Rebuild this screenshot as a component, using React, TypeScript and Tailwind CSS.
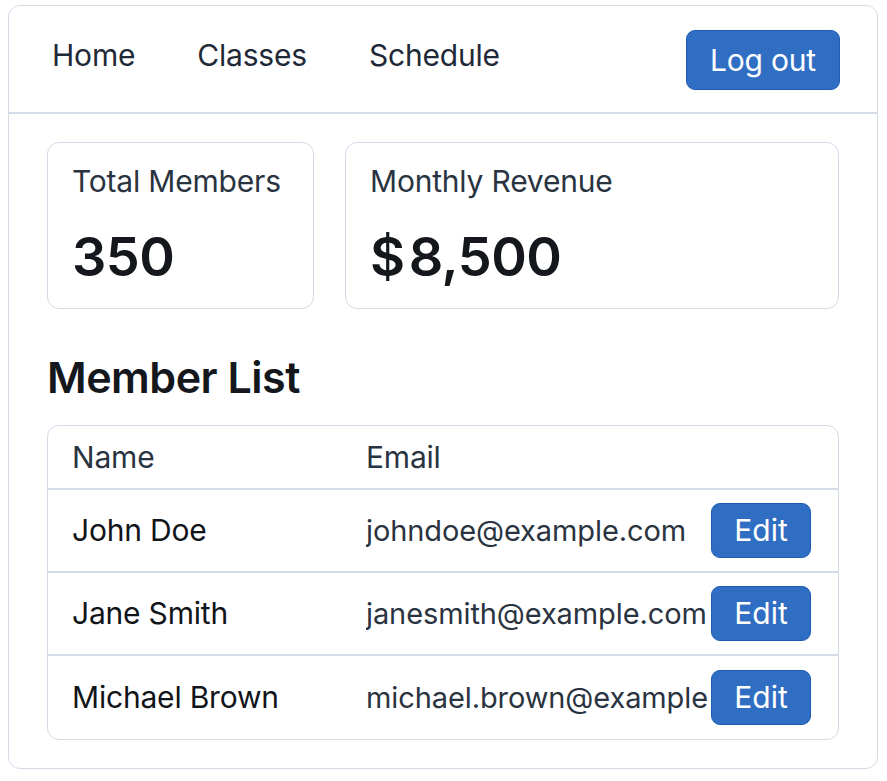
import React from "react"

const members = [
  { name: "John Doe", email: "johndoe@example.com" },
  { name: "Jane Smith", email: "janesmith@example.com" },
  { name: "Michael Brown", email: "michael.brown@example.com" },
]

function StatCard({ label, children, className }: { label: string; children: React.ReactNode; className?: string }) {
  return (
    <div className={"h-[167px] rounded-[12px] border border-[#d3dae6] pl-6 pr-4 pt-[20px] " + (className ?? "")}>
      <div className="text-[30px] leading-[36px] tracking-[-0.2px] text-[#2a3441]">{label}</div>
      <div className="mt-[26px] text-[54px] font-semibold leading-[64px] tracking-[-0.5px] text-[#14171c]">{children}</div>
    </div>
  )
}

export default function App() {
  return (
    <div className="min-h-[781px] bg-white pl-2 pr-[9px] pt-[5px] font-['Inter',sans-serif]">
      <div className="h-[764px] w-[870px] rounded-[12px] border border-[#d3dae6]">
        {/* Nav */}
        <div className="flex h-[108px] items-start border-b-2 border-[#d5dce7] pl-[43px] pr-[37px] pt-[24px]">
          <nav className="mt-[7px] flex gap-[62px] text-[30px] leading-[36px] tracking-[-0.2px] text-[#1f2937]">
            <a>Home</a>
            <a>Classes</a>
            <a>Schedule</a>
          </nav>
          <button className="ml-auto h-[60px] w-[154px] rounded-[9px] border border-[#1f5cb3] bg-[#2f6ec3] text-[30px] tracking-[-0.2px] text-white">
            Log out
          </button>
        </div>

        <div className="px-[38px] pt-[28px]">
          <div className="flex gap-[31px]">
            <StatCard label="Total Members" className="w-[267px]">350</StatCard>
            <StatCard label="Monthly Revenue" className="flex-1">
              <span className="mr-[4px]">$</span>8,500
            </StatCard>
          </div>

          <h2 className="mt-[42px] text-[43px] font-semibold leading-[52px] tracking-[-0.5px] text-[#14171c]">Member List</h2>

          <div className="mt-[22px] overflow-hidden rounded-[12px] border border-[#d3dae6]">
            <div className="flex h-[64px] items-center border-b-2 border-[#d5dce7] px-6 text-[30px] tracking-[-0.2px] text-[#2a3441]">
              <div className="w-[294px]">Name</div>
              <div>Email</div>
            </div>
            {members.map((m, i) => (
              <div
                key={m.name}
                className={
                  "flex h-[83px] items-center px-6 " +
                  (i < members.length - 1 ? "border-b-2 border-[#d5dce7]" : "")
                }
              >
                <div className="w-[294px] text-[30px] tracking-[-0.2px] text-[#111418]">{m.name}</div>
                <div className="w-[342px] overflow-hidden whitespace-nowrap text-[29px] tracking-[-0.1px] text-[#2a3441]">{m.email}</div>
                <button className="ml-[3px] h-[55px] w-[100px] rounded-[9px] border border-[#1f5cb3] bg-[#2f6ec3] text-[30px] text-white">
                  Edit
                </button>
              </div>
            ))}
          </div>
        </div>
      </div>
    </div>
  )
}
